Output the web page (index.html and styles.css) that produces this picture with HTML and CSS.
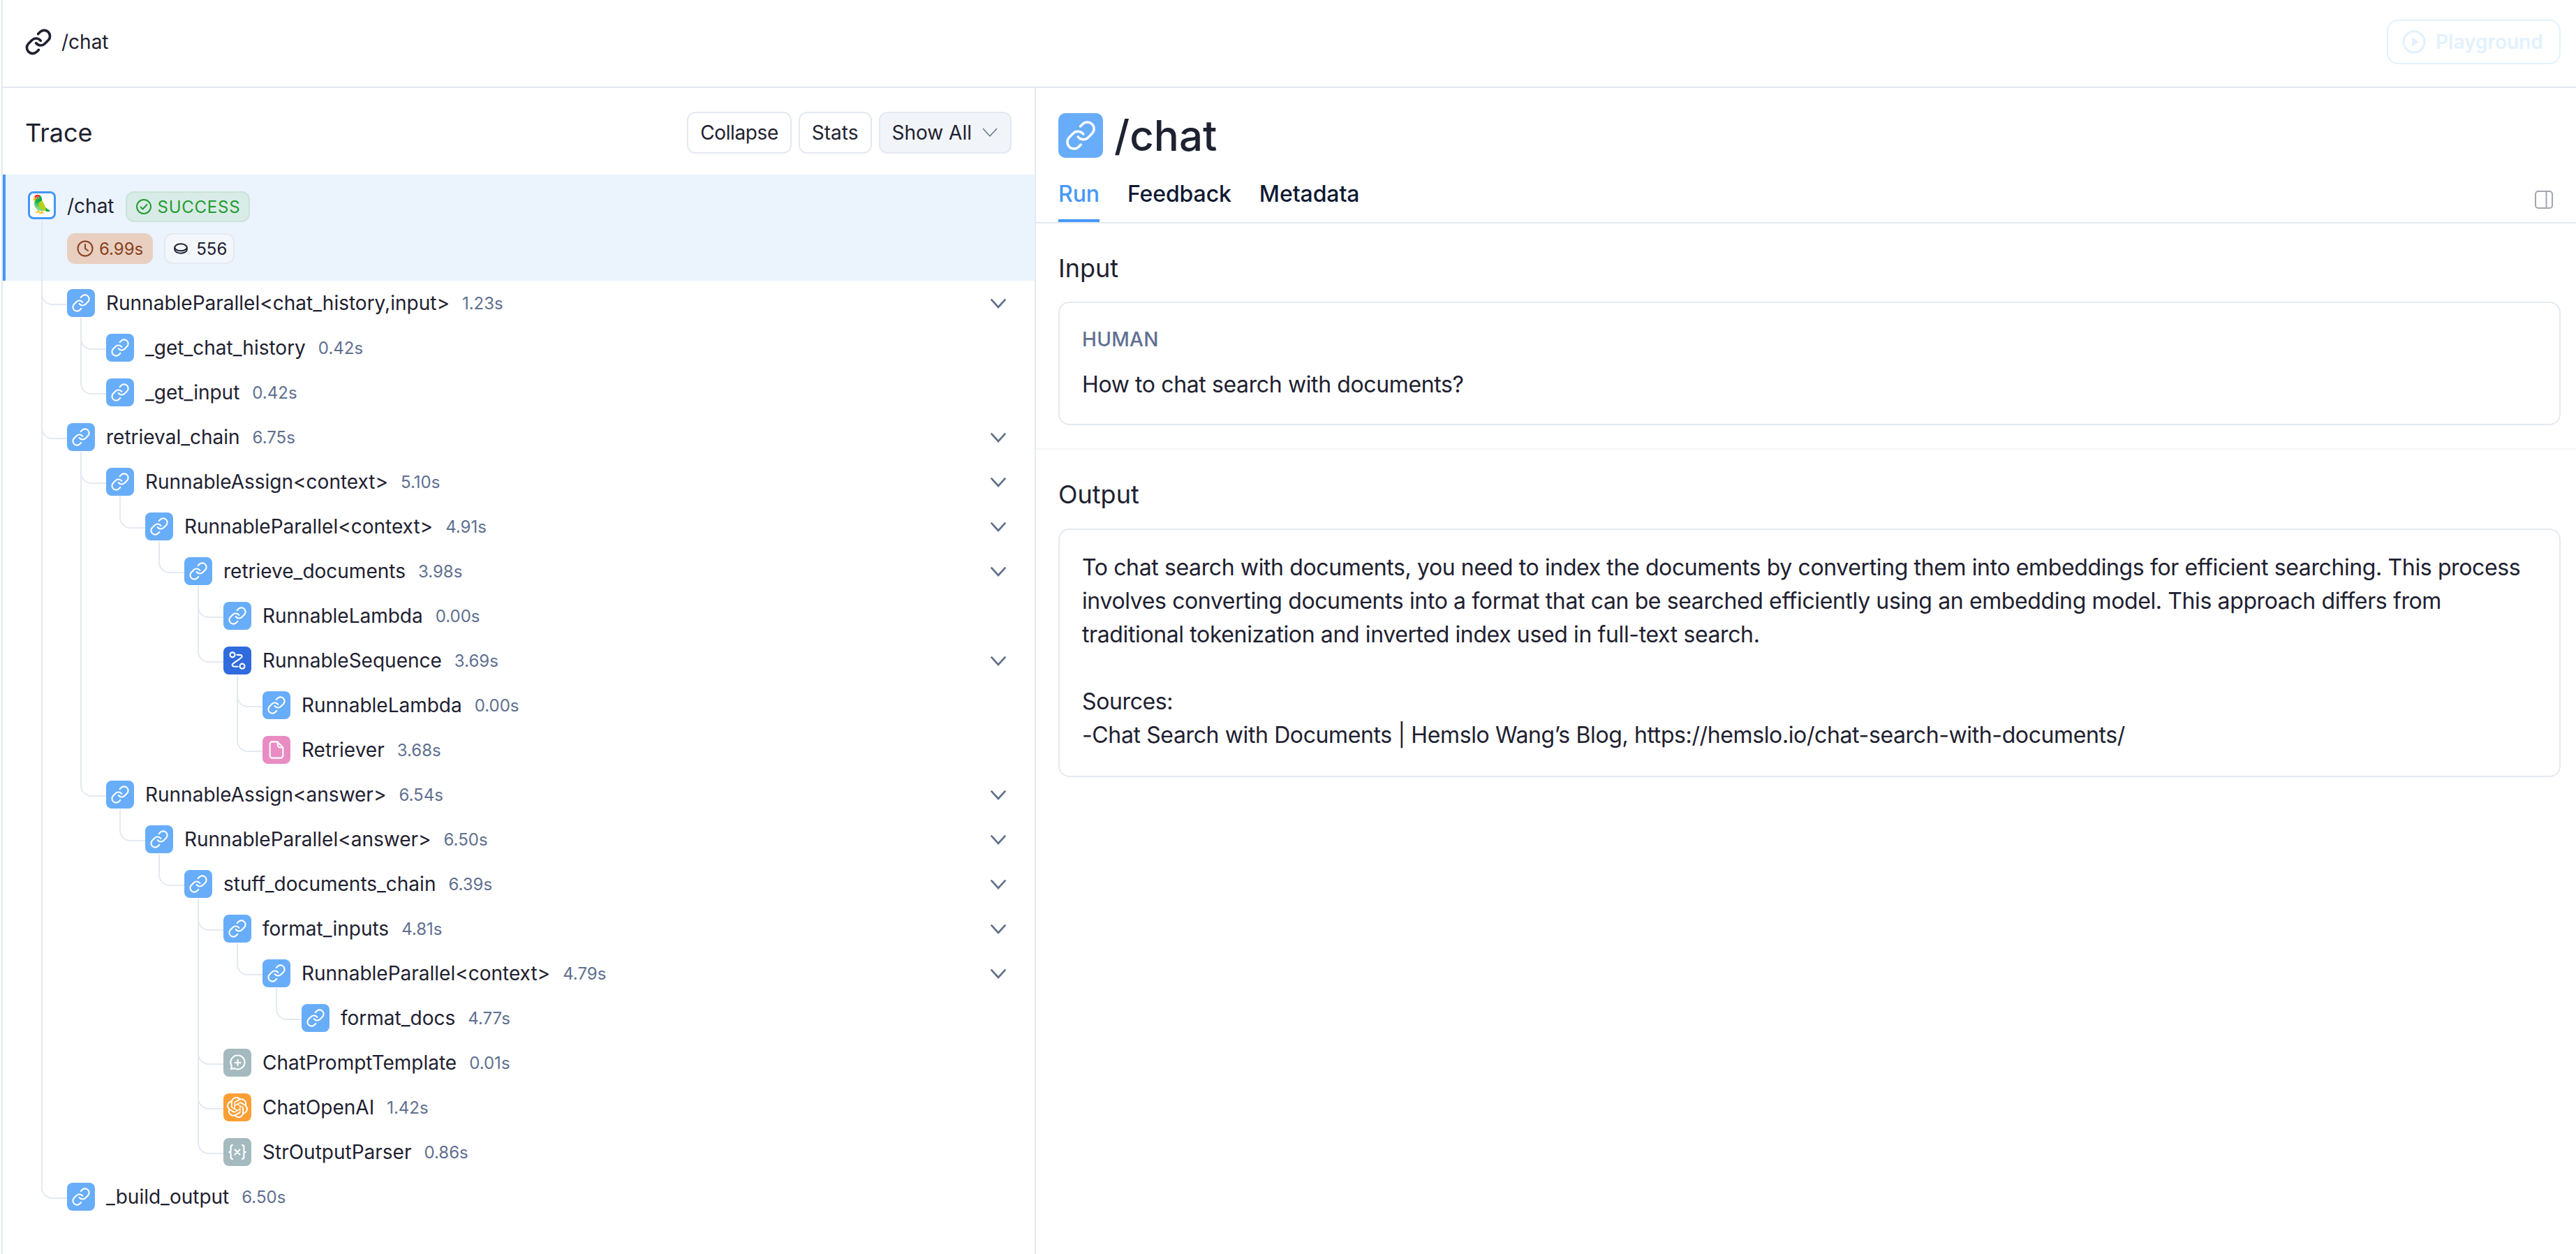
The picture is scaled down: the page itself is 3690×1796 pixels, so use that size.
FILE: index.html
```html
<!DOCTYPE html>
<html lang="en">
<head>
<meta charset="utf-8">
<title>/chat</title>
<link rel="stylesheet" href="styles.css">
</head>
<body>
<svg class="sprites" xmlns="http://www.w3.org/2000/svg">
  <symbol id="link" viewBox="0 0 24 24"><path d="M10 13a5 5 0 0 0 7.540.54l3-3a5 5 0 0 0-7.070-7.070l-1.720 1.710" fill="none" stroke-linecap="round" stroke-linejoin="round"/><path d="M14 11a5 5 0 0 0-7.540-.54l-3 3a5 5 0 0 0 7.070 7.070l1.710-1.710" fill="none" stroke-linecap="round" stroke-linejoin="round"/></symbol>
  <symbol id="chev" viewBox="0 0 24 24"><path d="M2.500 7l9.500 10.500L21.500 7" fill="none" stroke="currentColor" stroke-width="2.400"/></symbol>
</svg>
<div class="app">
  <header class="topbar">
    <div class="crumb">
      <svg class="crumb-icon"><use href="#link"/></svg>
      <span>/chat</span>
    </div>
    <button class="playground">
      <svg class="play-icon" viewBox="0 0 34 34"><circle cx="17" cy="17" r="15" fill="none" stroke="currentColor" stroke-width="3"/><path d="M14 10l10 7-10 7z" fill="currentColor"/></svg>
      <span>Playground</span>
    </button>
  </header>
  <main class="panes">
    <section class="trace">
      <div class="trace-head">
        <h2>Trace</h2>
        <div class="actions">
          <button class="btn btn-tight">Collapse</button>
          <button class="btn">Stats</button>
          <button class="btn btn-muted">Show All<svg class="caret" viewBox="0 0 24 24"><path d="M2 6l10 11L22 6" fill="none" stroke="currentColor" stroke-width="1.500"/></svg></button>
        </div>
      </div>
      <div class="root-row">
        <div class="root-line1">
          <span class="parrot">🦜</span>
          <span class="root-name">/chat</span>
          <span class="badge-success"><svg class="badge-icon" viewBox="0 0 24 24"><circle cx="12" cy="12" r="10" fill="none" stroke="currentColor" stroke-width="2"/><path d="M7.500 12.500l3 3 6-6.500" fill="none" stroke="currentColor" stroke-width="2" stroke-linecap="round" stroke-linejoin="round"/></svg>SUCCESS</span>
        </div>
        <div class="root-line2">
          <span class="badge-time"><svg class="badge-icon" viewBox="0 0 24 24"><circle cx="12" cy="12" r="10.500" fill="none" stroke="currentColor" stroke-width="2"/><path d="M12 6v6l4 3" fill="none" stroke="currentColor" stroke-width="2" stroke-linecap="round"/></svg>6.99s</span>
          <span class="badge-tokens"><svg class="badge-icon coin" viewBox="0 0 24 24"><ellipse cx="12" cy="10" rx="10.500" ry="6" fill="none" stroke="currentColor" stroke-width="2.400"/><path d="M1.500 10v4c0 3.300 4.700 6 10.500 6s10.500-2.700 10.500-6v-4" fill="none" stroke="currentColor" stroke-width="2.400"/></svg>556</span>
        </div>
      </div>
      <div class="tree">
        <div class="node l0" style="--span:2.1875"><i class="ico link"><svg><use href="#link"/></svg></i><span class="name">RunnableParallel&lt;chat_history,input&gt;</span><span class="dur">1.23s</span><svg class="chev"><use href="#chev"/></svg></div>
        <div class="node l1" style="--span:1"><i class="ico link"><svg><use href="#link"/></svg></i><span class="name">_get_chat_history</span><span class="dur">0.42s</span></div>
        <div class="node l1" style="--span:2"><i class="ico link"><svg><use href="#link"/></svg></i><span class="name">_get_input</span><span class="dur">0.42s</span></div>
        <div class="node l0" style="--span:5.1875"><i class="ico link"><svg><use href="#link"/></svg></i><span class="name">retrieval_chain</span><span class="dur">6.75s</span><svg class="chev"><use href="#chev"/></svg></div>
        <div class="node l1" style="--span:1"><i class="ico link"><svg><use href="#link"/></svg></i><span class="name">RunnableAssign&lt;context&gt;</span><span class="dur">5.10s</span><svg class="chev"><use href="#chev"/></svg></div>
        <div class="node l2" style="--span:1"><i class="ico link"><svg><use href="#link"/></svg></i><span class="name">RunnableParallel&lt;context&gt;</span><span class="dur">4.91s</span><svg class="chev"><use href="#chev"/></svg></div>
        <div class="node l3" style="--span:1"><i class="ico link"><svg><use href="#link"/></svg></i><span class="name">retrieve_documents</span><span class="dur">3.98s</span><svg class="chev"><use href="#chev"/></svg></div>
        <div class="node l4" style="--span:1"><i class="ico link"><svg><use href="#link"/></svg></i><span class="name">RunnableLambda</span><span class="dur">0.00s</span></div>
        <div class="node l4" style="--span:2"><i class="ico seq"><svg viewBox="0 0 24 24" stroke-linecap="round" stroke-linejoin="round"><path d="M11.500 5h.434c3.048 0 4.571 0 5.150.547a2 2 0 0 1 .586 1.845c-.156.781-1.400 1.661-3.888 3.420l-4.065 2.876c-2.488 1.759-3.732 2.639-3.888 3.420a2 2 0 0 0 .586 1.845c.579.547 2.102.547 5.150.547h.935"/><circle cx="6" cy="5" r="3"/><circle cx="18" cy="19" r="3"/></svg></i><span class="name">RunnableSequence</span><span class="dur">3.69s</span><svg class="chev"><use href="#chev"/></svg></div>
        <div class="node l5" style="--span:1"><i class="ico link"><svg><use href="#link"/></svg></i><span class="name">RunnableLambda</span><span class="dur">0.00s</span></div>
        <div class="node l5" style="--span:2"><i class="ico doc"><svg viewBox="0 0 24 24" stroke-linejoin="round"><path d="M13 2H7a3 3 0 0 0-3 3v14a3 3 0 0 0 3 3h10a3 3 0 0 0 3-3V9z"/><path d="M13.500 2.500V6a3 3 0 0 0 3 3h3"/></svg></i><span class="name">Retriever</span><span class="dur">3.68s</span></div>
        <div class="node l1" style="--span:8"><i class="ico link"><svg><use href="#link"/></svg></i><span class="name">RunnableAssign&lt;answer&gt;</span><span class="dur">6.54s</span><svg class="chev"><use href="#chev"/></svg></div>
        <div class="node l2" style="--span:1"><i class="ico link"><svg><use href="#link"/></svg></i><span class="name">RunnableParallel&lt;answer&gt;</span><span class="dur">6.50s</span><svg class="chev"><use href="#chev"/></svg></div>
        <div class="node l3" style="--span:1"><i class="ico link"><svg><use href="#link"/></svg></i><span class="name">stuff_documents_chain</span><span class="dur">6.39s</span><svg class="chev"><use href="#chev"/></svg></div>
        <div class="node l4" style="--span:1"><i class="ico link"><svg><use href="#link"/></svg></i><span class="name">format_inputs</span><span class="dur">4.81s</span><svg class="chev"><use href="#chev"/></svg></div>
        <div class="node l5" style="--span:1"><i class="ico link"><svg><use href="#link"/></svg></i><span class="name">RunnableParallel&lt;context&gt;</span><span class="dur">4.79s</span><svg class="chev"><use href="#chev"/></svg></div>
        <div class="node l6" style="--span:1"><i class="ico link"><svg><use href="#link"/></svg></i><span class="name">format_docs</span><span class="dur">4.77s</span></div>
        <div class="node l4" style="--span:4"><i class="ico gray"><svg viewBox="0 0 24 24" stroke-linecap="round" stroke-linejoin="round"><path d="M12.500 3a8.500 8.500 0 1 1-3.700 16.150c-.5-.2-1-.1-1.500 0l-3.300.85.900-3.100c.1-.5.100-.9-.1-1.400A8.500 8.500 0 0 1 12.500 3z"/><path d="M12.500 8.500v7M9 12h7"/></svg></i><span class="name">ChatPromptTemplate</span><span class="dur">0.01s</span></div>
        <div class="node l4" style="--span:5"><i class="ico orange"><svg class="logo" viewBox="0 0 24 24"><path d="M22.2819 9.8211a5.9847 5.9847 0 0 0-.5157-4.9108 6.0462 6.0462 0 0 0-6.5098-2.9A6.0651 6.0651 0 0 0 4.9807 4.1818a5.9847 5.9847 0 0 0-3.9977 2.9 6.0462 6.0462 0 0 0 .7427 7.0966 5.98 5.98 0 0 0 .511 4.9107 6.051 6.051 0 0 0 6.5146 2.9001A5.9847 5.9847 0 0 0 13.2599 24a6.0557 6.0557 0 0 0 5.7718-4.2058 5.9894 5.9894 0 0 0 3.9977-2.9001 6.0557 6.0557 0 0 0-.7475-7.0729zm-9.022 12.6081a4.4755 4.4755 0 0 1-2.8764-1.0408l.1419-.0804 4.7783-2.7582a.7948.7948 0 0 0 .3927-.6813v-6.7369l2.02 1.1686a.071.071 0 0 1 .038.052v5.5826a4.504 4.504 0 0 1-4.4945 4.4944zm-9.6607-4.1254a4.4708 4.4708 0 0 1-.5346-3.0137l.142.0852 4.783 2.7582a.7712.7712 0 0 0 .7806 0l5.8428-3.3685v2.3324a.0804.0804 0 0 1-.0332.0615L9.74 19.9502a4.4992 4.4992 0 0 1-6.1408-1.6464zM2.3408 7.8956a4.485 4.485 0 0 1 2.3655-1.9728V11.6a.7664.7664 0 0 0 .3879.6765l5.8144 3.3543-2.0201 1.1685a.0757.0757 0 0 1-.071 0l-4.8303-2.7865A4.504 4.504 0 0 1 2.3408 7.872zm16.5963 3.8558L13.1038 8.364 15.1192 7.2a.0757.0757 0 0 1 .071 0l4.8303 2.7913a4.4944 4.4944 0 0 1-.6765 8.1042v-5.6772a.79.79 0 0 0-.407-.667zm2.0107-3.0231l-.142-.0852-4.7735-2.7818a.7759.7759 0 0 0-.7854 0L9.409 9.2297V6.8974a.0662.0662 0 0 1 .0284-.0615l4.8303-2.7866a4.4992 4.4992 0 0 1 6.6802 4.66zM8.3065 12.863l-2.02-1.1638a.0804.0804 0 0 1-.038-.0567V6.0742a4.4992 4.4992 0 0 1 7.3757-3.4537l-.142.0805L8.704 5.459a.7948.7948 0 0 0-.3927.6813zm1.0976-2.3654l2.602-1.4998 2.6069 1.4998v2.9994l-2.5974 1.4997-2.6067-1.4997Z"/></svg></i><span class="name">ChatOpenAI</span><span class="dur">1.42s</span></div>
        <div class="node l4" style="--span:6"><i class="ico gray"><svg viewBox="0 0 24 24" stroke-linecap="round" stroke-linejoin="round"><path d="M6 3.500c-1.500 0-2 .8-2 2V10c0 1-.8 2-2 2 1.200 0 2 1 2 2v4.500c0 1.200.5 2 2 2"/><path d="M18 3.500c1.500 0 2 .8 2 2V10c0 1 .8 2 2 2-1.200 0-2 1-2 2v4.500c0 1.200-.5 2-2 2"/><path d="M9 9l6 6M15 9l-6 6"/></svg></i><span class="name">StrOutputParser</span><span class="dur">0.86s</span></div>
        <div class="node l0" style="--span:22.1875"><i class="ico link"><svg><use href="#link"/></svg></i><span class="name">_build_output</span><span class="dur">6.50s</span></div>
      </div>
    </section>
    <section class="detail">
      <div class="detail-title">
        <i class="ico link big"><svg><use href="#link"/></svg></i>
        <h1>/chat</h1>
      </div>
      <nav class="tabs">
        <a class="tab active">Run</a>
        <a class="tab">Feedback</a>
        <a class="tab">Metadata</a>
        <svg class="side-icon" viewBox="0 0 26 26"><rect x="1" y="1" width="24" height="24" rx="4" fill="none" stroke="currentColor" stroke-width="2"/><path d="M16.500 1v24" stroke="currentColor" stroke-width="2"/></svg>
      </nav>
      <div class="block block-input">
        <h3>Input</h3>
        <div class="card card-input">
          <div class="role">HUMAN</div>
          <p>How to chat search with documents?</p>
        </div>
      </div>
      <div class="block block-output">
        <h3>Output</h3>
        <div class="card card-output">
          <p>To chat search with documents, you need to index the documents by converting them into embeddings for efficient searching. This process involves converting documents into a format that can be searched efficiently using an embedding model. This approach differs from traditional tokenization and inverted index used in full-text search.</p>
          <p>&nbsp;</p>
          <p>Sources:</p>
          <p>-Chat Search with Documents | Hemslo Wang’s Blog, https://hemslo.io/chat-search-with-documents/</p>
        </div>
      </div>
    </section>
  </main>
</div>
</body>
</html>
```

FILE: styles.css
```css
* { box-sizing: border-box; }
html, body { margin: 0; height: 100%; background: #fff; }
body { font-family: Inter, "Liberation Sans", sans-serif; color: #1e2130; font-size: 28px; overflow: hidden; }
.sprites { display: none; }
button { font-family: inherit; }
h1, h2, h3, p { margin: 0; font-weight: 400; }

.app { height: 1796px; margin-left: 2px; display: flex; flex-direction: column; border-left: 2px solid #e4e9f1; }
.topbar { height: 126px; flex: none; display: flex; align-items: center; justify-content: space-between; border-bottom: 2px solid #e4e9f1; padding: 0 22px 4px 31px; }
.crumb { display: flex; align-items: center; gap: 13px; font-size: 28px; }
.crumb-icon { width: 40px; height: 40px; stroke: #1e2130; stroke-width: 2.2; fill: none; }
.playground { height: 64px; width: 249px; display: flex; align-items: center; gap: 14px; padding: 0 20px; background: #fff; border: 2px solid #e2f1fd; border-radius: 16px; color: #e2f1fd; font-size: 28px; font-weight: 600; }
.play-icon { width: 34px; height: 34px; }

.panes { flex: 1; display: flex; min-height: 0; }
.trace { width: 1480px; flex: none; border-right: 2px solid #e4e9f1; display: flex; flex-direction: column; }
.trace-head { height: 124px; display: flex; align-items: center; justify-content: space-between; padding: 4px 33px 0 32px; }
.trace-head h2 { font-size: 36px; }
.actions { display: flex; gap: 10px; }
.btn { height: 60px; padding: 0 17px; display: flex; align-items: center; gap: 14px; background: #fff; border: 2px solid #e4e9f1; border-radius: 12px; font-size: 28px; color: #1e2130; }
.btn-tight { letter-spacing: -0.400px; }
.btn-muted { background: #f1f4f9; }
.caret { width: 24px; height: 24px; color: #64748b; }

.root-row { height: 152px; background: #ebf3fd; border-left: 4px solid #4597f8; padding: 24px 0 0 32px; display: flex; flex-direction: column; gap: 16px; }
.root-line1, .root-line2 { display: flex; align-items: flex-start; }
.root-line1 { height: 44px; }
.root-line2 { padding-left: 56px; gap: 16px; }
.parrot { width: 40px; height: 40px; border: 3px solid #4597f8; border-radius: 8px; background: #fff; font-size: 25px; line-height: 32px; text-align: center; overflow: hidden; font-family: "Noto Color Emoji", "DejaVu Sans", sans-serif; }
.root-name { margin-left: 16px; line-height: 42px; }
.badge-success, .badge-time, .badge-tokens { height: 44px; display: inline-flex; align-items: center; border-radius: 12px; font-size: 24px; gap: 8px; border: 2px solid transparent; }
.badge-success { margin-left: 16px; padding: 0 12px; background: #d9ebe7; border-color: #c9e4d6; color: #1f9d2f; letter-spacing: 0.750px; }
.badge-time { padding: 0 12px; background: #e8cfc0; color: #8a3f1e; }
.badge-tokens { padding: 0 9px 0 12px; border-color: #e4e9f1; background: #f3f7fc; }
.badge-icon { width: 24px; height: 24px; flex: none; }
.coin { width: 20px; height: 20px; margin-right: 4px; }

.tree { position: relative; }
.node { height: 64px; display: flex; align-items: center; position: relative; padding-right: 39px; }
.l0 { --pad: 92px; }
.l1 { --pad: 148px; }
.l2 { --pad: 204px; }
.l3 { --pad: 260px; }
.l4 { --pad: 316px; }
.l5 { --pad: 372px; }
.l6 { --pad: 428px; }
.node { padding-left: var(--pad); }
.node::before { content: ""; position: absolute; left: calc(var(--pad) - 37px); width: 37px; top: calc(53px - 64px * var(--span)); height: calc(64px * var(--span) - 20px); border-left: 2px solid #e4e9f1; border-bottom: 2px solid #e4e9f1; border-bottom-left-radius: 16px; }
.ico { width: 40px; height: 40px; flex: none; border-radius: 8px; display: flex; align-items: center; justify-content: center; color: #fff; position: relative; }
.ico svg { width: 28px; height: 28px; stroke: #fff; stroke-width: 1.8; fill: none; }
.ico svg.logo { width: 30px; height: 30px; fill: #fff; stroke: none; }
.link { background: #68adf9; }
.seq { background: #2f6bdc; }
.doc { background: #e88cc3; }
.gray { background: #a4babf; }
.orange { background: #fb9f35; }
.name { margin-left: 16px; }
.dur { margin-left: 18px; font-size: 24px; color: #5f7090; }
.chev { width: 26px; height: 26px; margin-left: auto; color: #5f6f88; }

.detail { flex: 1; min-width: 0; }
.detail-title { display: flex; align-items: center; gap: 16px; padding: 36px 0 0 32px; height: 100px; }
.ico.big { width: 64px; height: 64px; border-radius: 10px; }
.ico.big svg { width: 46px; height: 46px; }
.detail-title h1 { font-size: 60px; font-weight: 500; color: #1e2130; }
.tabs { height: 94px; display: flex; gap: 40px; align-items: flex-end; padding: 0 33px 0 32px; border-bottom: 2px solid #e4e9f1; }
.tab { font-size: 32px; font-weight: 500; color: #101a33; height: 68px; line-height: 56px; border-bottom: 4px solid transparent; letter-spacing: -0.100px; }
.tab.active { color: #4597f8; border-bottom-color: #4597f8; }
.side-icon { width: 26px; height: 26px; margin: 0 0 19px auto; color: #a2a6b2; }
.block { padding: 40px 22px 0 32px; }
.block-input { border-bottom: 2px solid #f3f5f8; padding-bottom: 33px; }
.block h3 { font-size: 36px; line-height: 48px; margin-bottom: 24px; }
.block-output h3 { margin-bottom: 25px; }
.card { border: 2px solid #e4e9f1; border-radius: 16px; padding: 32px; font-size: 32px; line-height: 48px; letter-spacing: -0.380px; }
.card-output { padding: 30px 32px 34px; }
.role { font-size: 28px; font-weight: 500; color: #5f7090; letter-spacing: 0.300px; line-height: 40px; margin-bottom: 21px; }
```
